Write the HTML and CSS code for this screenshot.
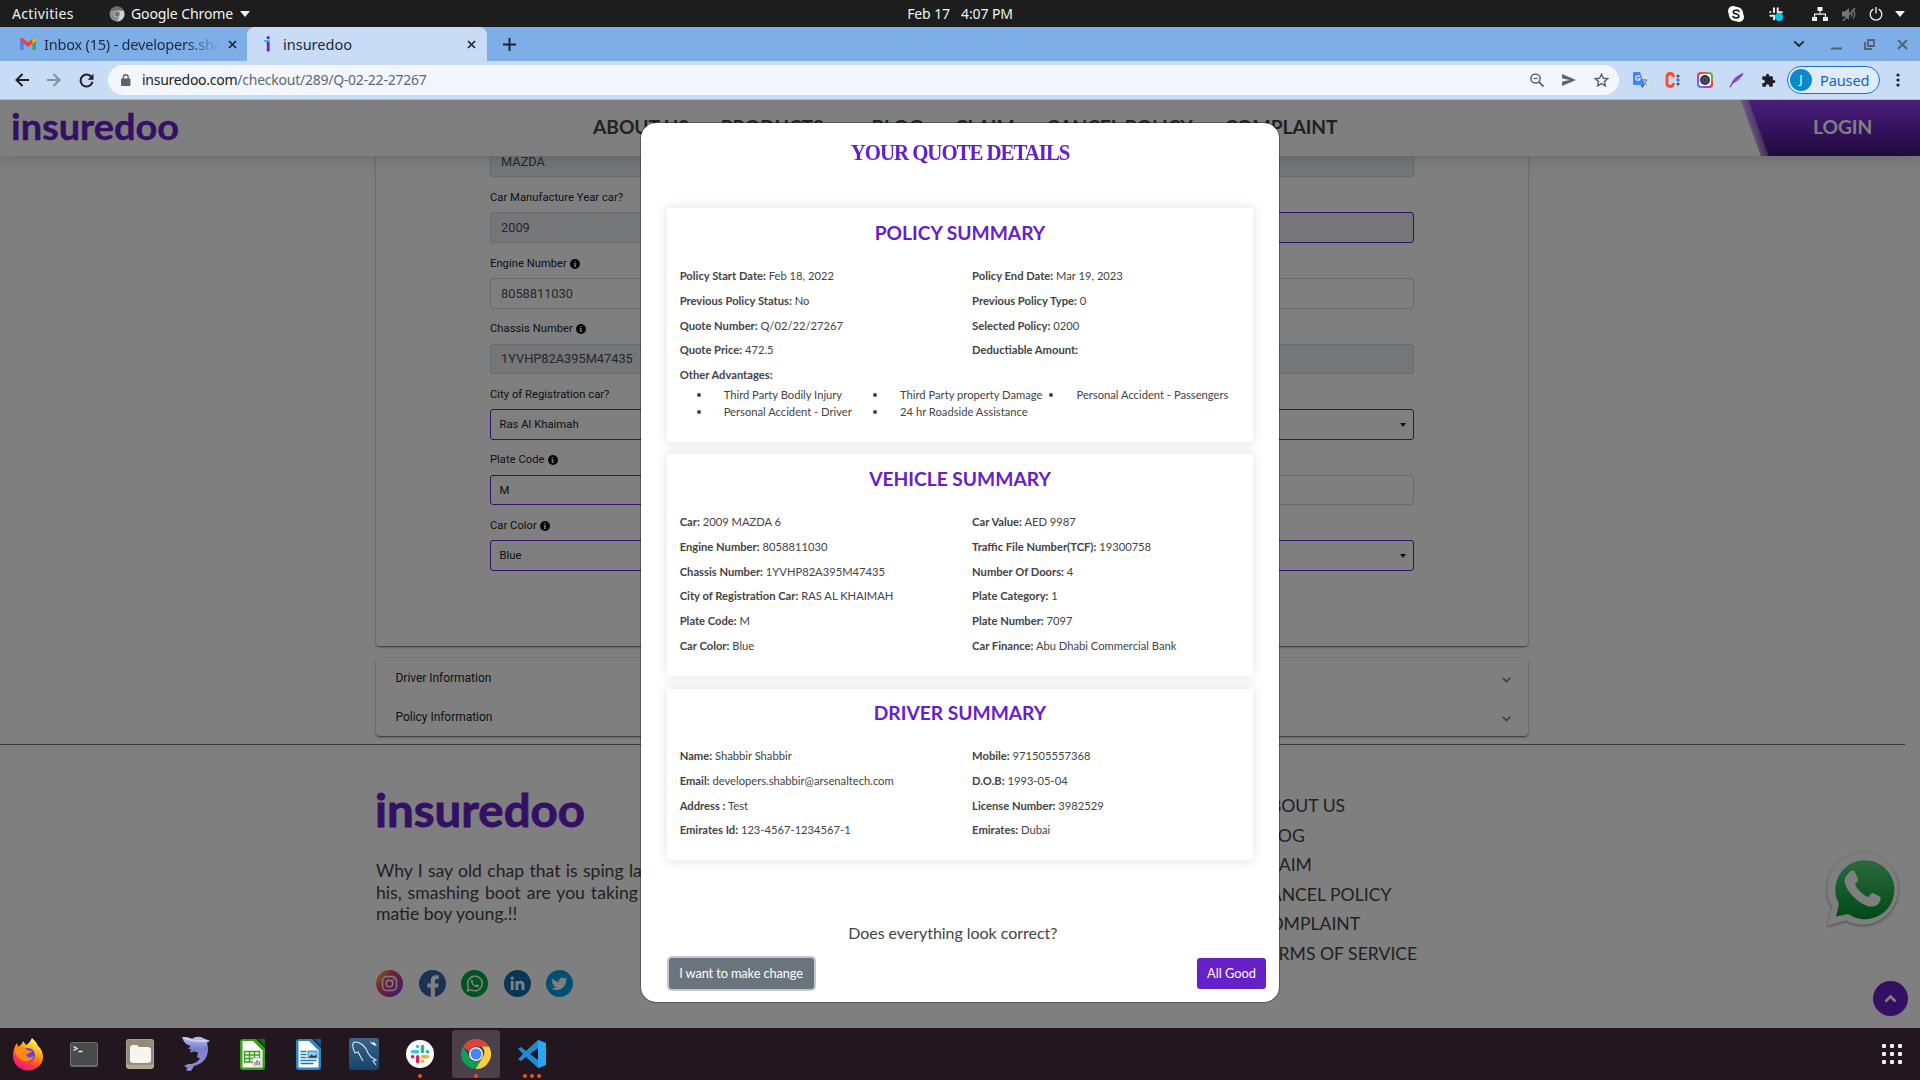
FILE: index.html
```html
<!DOCTYPE html>
<html lang="en">
<head>
<meta charset="utf-8">
<title>insuredoo</title>
<link rel="stylesheet" href="styles.css">
</head>
<body>
<div class="desktop">
  <div class="topbar">
    <div class="topbar-left">
      <span class="activities">Activities</span>
      <svg class="app-icon" width="16" height="16" viewBox="0 0 16 16"><circle cx="8" cy="8" r="7.5" fill="#8a8a8a"/><path d="M8 4.5h6.6A7.5 7.5 0 0 1 8 15.500l3-5.700z" fill="#d2d2d2"/><path d="M1.500 4.300A7.500 7.500 0 0 1 14.600 4.500H8z" fill="#6d6d6d"/><circle cx="8" cy="8" r="3.500" fill="#ccc"/><circle cx="8" cy="8" r="2.700" fill="#777"/></svg>
      <span class="app-name">Google Chrome</span>
      <svg class="caret" width="10" height="6" viewBox="0 0 10 6"><path d="M0 0h10L5 6z" fill="#f2f2f2"/></svg>
    </div>
    <div class="clock"><span>Feb 17</span><span>4:07 PM</span></div>
    <div class="topbar-right">
      <svg class="tray tray-skype" width="18" height="18" viewBox="0 0 18 18"><rect x="1" y="1" width="10" height="10" rx="5" fill="#fff"/><rect x="7" y="7" width="10" height="10" rx="5" fill="#fff"/><circle cx="9" cy="9" r="7.300" fill="#fff"/><path d="M12 6.300C11.200 4.900 6.300 4.600 6.300 7c0 2.600 5.600 1.300 5.600 4 0 2.500-5 2.200-5.900.5" fill="none" stroke="#1d1d1d" stroke-width="1.700" stroke-linecap="round"/></svg>
      <svg class="tray tray-slack" width="16" height="16" viewBox="0 0 16 16"><g stroke="#e8e8e8" stroke-width="2" stroke-linecap="round"><path d="M6 2.200v4M2.200 6h.2M2.300 9.700h4M9.700 2.200v4M9.800 6.200h4M6 10v3.500"/></g><circle cx="11" cy="11" r="4" fill="#00c8f5"/></svg>
      <svg class="tray tray-net" width="16" height="14" viewBox="0 0 16 14"><path d="M5.500 0h5v4h-2v2.500H14V10h2v4h-5v-4h1.800V7.700H3.200V10H5v4H0v-4h2V6.500h5.500V4h-2z" fill="#f2f2f2"/></svg>
      <svg class="tray tray-mute" width="16" height="16" viewBox="0 0 16 16"><path d="M1 5.500h3L8 2v12l-4-3.500H1z" fill="#777"/><path d="M10 5.500q2 2.500 0 5M12 3.500q3.400 4.500 0 9M2 15 14 2" fill="none" stroke="#777" stroke-width="1.300"/></svg>
      <svg class="tray tray-power" width="14" height="14" viewBox="0 0 14 14"><path d="M4.300 2.200a5.800 5.800 0 1 0 5.400 0M7 0v6.500" fill="none" stroke="#f2f2f2" stroke-width="1.300"/></svg>
      <svg class="tray" width="10" height="6" viewBox="0 0 10 6"><path d="M0 0h10L5 6z" fill="#f2f2f2"/></svg>
    </div>
  </div>

  <div class="tabstrip">
    <div class="tab">
      <svg width="16" height="12" viewBox="0 0 16 12"><path d="M0 2v9a1 1 0 0 0 1 1h2.600V5.500z" fill="#4285f4"/><path d="M16 2v9a1 1 0 0 1-1 1h-2.600V5.500z" fill="#34a853"/><path d="M0 2C0 .2 1.900-.6 3.200.6L8 4.300 12.800.6C14.100-.6 16 .2 16 2l-3.600 3.600L8 9 3.600 5.600z" fill="#ea4335"/><path d="M12.400 1v4.600L16 2.800V2C16 .2 14.100-.6 12.400 1z" fill="#fbbc04"/></svg>
      <span class="tab-title tab-title-faded">Inbox (15) - developers.sha</span>
      <svg class="tab-close" width="9" height="9" viewBox="0 0 9 9"><path d="M1 1l7 7M8 1L1 8" stroke="#1d2733" stroke-width="1.700"/></svg>
    </div>
    <div class="tab tab-active">
      <svg width="8" height="16" viewBox="0 0 8 16"><circle cx="5.200" cy="1.700" r="1.600" fill="#7a24c9"/><path d="M0 4h6.600v2.600H2.500z" fill="#12c3e8"/><path d="M3.800 6h2.800v9.500H3.800z" fill="#6d22c9"/></svg>
      <span class="tab-title">insuredoo</span>
      <svg class="tab-close" width="9" height="9" viewBox="0 0 9 9"><path d="M1 1l7 7M8 1L1 8" stroke="#1d2733" stroke-width="1.700"/></svg>
    </div>
    <svg class="new-tab" width="13" height="13" viewBox="0 0 13 13"><path d="M6.500 0v13M0 6.500h13" stroke="#202124" stroke-width="1.900"/></svg>
    <div class="window-controls">
      <svg width="12" height="8" viewBox="0 0 12 8"><path d="M1.300 1.300 6 6l4.700-4.700" fill="none" stroke="#202932" stroke-width="1.900"/></svg>
      <svg width="11" height="12" viewBox="0 0 11 12"><path d="M0 10.500h11" stroke="#56616e" stroke-width="2"/></svg>
      <svg width="11" height="11" viewBox="0 0 11 11"><path d="M4 1h6v6H4zM1 3v7h7" fill="none" stroke="#56616e" stroke-width="1.800"/></svg>
      <svg width="11" height="11" viewBox="0 0 11 11"><path d="M1 1l9 9M10 1l-9 9" stroke="#56616e" stroke-width="1.900"/></svg>
    </div>
  </div>

  <div class="toolbar">
    <svg class="nav-icon" width="14" height="14" viewBox="0 0 14 14"><path d="M7.500 1 1.500 7l6 6M1.500 7H14" fill="none" stroke="#1f2023" stroke-width="2"/></svg>
    <svg class="nav-icon" width="14" height="14" viewBox="0 0 14 14"><path d="M6.500 1l6 6-6 6M12.500 7H0" fill="none" stroke="#85909f" stroke-width="2"/></svg>
    <svg class="nav-icon" width="15" height="15" viewBox="0 0 15 15"><path d="M12.700 4.300A6 6 0 1 0 13.500 8.800" fill="none" stroke="#1f2023" stroke-width="2"/><path d="M14.500.8v6H8.600z" fill="#1f2023"/></svg>
    <div class="omnibox">
      <svg width="10" height="12" viewBox="0 0 10 12"><rect x="0" y="4.500" width="9.500" height="7.500" rx="1" fill="#5f6368"/><path d="M2.300 5V3.200a2.450 2.450 0 0 1 4.900 0V5" fill="none" stroke="#5f6368" stroke-width="1.300"/></svg>
      <span class="url"><b>insuredoo.com</b>/checkout/289/Q-02-22-27267</span>
      <div class="omni-actions">
        <svg width="14" height="14" viewBox="0 0 14 14"><circle cx="5.500" cy="5.500" r="4.600" fill="none" stroke="#5f6368" stroke-width="1.500"/><path d="M3.300 5.500h4.400" stroke="#5f6368" stroke-width="1.200"/><path d="M9 9l4.500 4.500" stroke="#5f6368" stroke-width="1.800"/></svg>
        <svg width="14" height="12" viewBox="0 0 14 12"><path d="M0 0l14 6L0 12l.2-4.600L8 6 .2 4.600z" fill="#5f6368"/></svg>
        <svg width="15" height="14" viewBox="0 0 15 14"><path d="M7.500 1.300l1.900 4 4.300.4-3.300 2.900 1 4.300-3.900-2.300-3.900 2.300 1-4.300L1.300 5.700l4.300-.4z" fill="none" stroke="#5f6368" stroke-width="1.400"/></svg>
      </div>
    </div>
    <div class="extensions">
      <svg width="16" height="16" viewBox="0 0 16 16"><path d="M6 4h9a1 1 0 0 1 1 1v10a1 1 0 0 1-1 1H9.500z" fill="#d8dde3"/><path d="M8.500 8h6M11.500 7v1M13.500 8q-1 4-4 5M10 9q1 2.500 4 4" fill="none" stroke="#607d8b" stroke-width="1"/><path d="M1 0h6l4.500 13H1a1 1 0 0 1-1-1V1a1 1 0 0 1 1-1z" fill="#4285f4"/><path d="M7.500 13h4l-2 3z" fill="#2a56c6"/><path d="M7 4.700a2.300 2.300 0 1 0 .3 2H5.200" fill="none" stroke="#fff" stroke-width="1.100"/></svg>
      <svg width="16" height="16" viewBox="0 0 16 16"><path d="M8.300 5V4.200Q8.300 1.500 5.200 1.500 2 1.500 2 4.500v7q0 3 3.200 3 3.100 0 3.100-2.700V11" fill="none" stroke="#ff4b2b" stroke-width="2.800"/><circle cx="13" cy="4" r="1.500" fill="#42526b"/><circle cx="13" cy="8" r="1.700" fill="#1e88e5"/><circle cx="13" cy="12" r="1.500" fill="#42526b"/></svg>
      <svg width="16" height="16" viewBox="0 0 16 16"><defs><linearGradient id="cam" x1="0" y1="1" x2="1" y2="0"><stop offset="0" stop-color="#16b5ff"/><stop offset=".3" stop-color="#b236e8"/><stop offset=".6" stop-color="#ff4030"/><stop offset="1" stop-color="#3ee06a"/></linearGradient></defs><rect width="16" height="16" rx="3.500" fill="url(#cam)"/><rect x="2" y="2" width="12" height="12" rx="3" fill="#fff"/><circle cx="8" cy="8" r="5" fill="#2e3b3f"/><circle cx="8" cy="8" r="2.300" fill="none" stroke="#5c777d"/></svg>
      <svg width="16" height="16" viewBox="0 0 16 16"><path d="M15 .5Q3 5 2.500 12 12 9 15 .5z" fill="#a66bd0"/><path d="M.8 15.300Q5 8 13.500 2" fill="none" stroke="#6d2f96" stroke-width="1.100"/></svg>
      <svg width="15" height="15" viewBox="0 0 24 24"><path d="M20.500 11H19V7c0-1.100-.9-2-2-2h-4V3.500a2.500 2.500 0 0 0-5 0V5H4c-1.100 0-2 .9-2 2v3.800h1.500a2.700 2.700 0 0 1 0 5.400H2V20c0 1.100.9 2 2 2h3.800v-1.500a2.700 2.700 0 0 1 5.400 0V22H17c1.100 0 2-.9 2-2v-4h1.500a2.500 2.500 0 0 0 0-5z" fill="#202124"/></svg>
    </div>
    <div class="profile"><span class="avatar">J</span><span class="paused">Paused</span></div>
    <svg class="kebab" width="4" height="14" viewBox="0 0 4 14"><circle cx="2" cy="2" r="1.600" fill="#202124"/><circle cx="2" cy="7" r="1.600" fill="#202124"/><circle cx="2" cy="12" r="1.600" fill="#202124"/></svg>
  </div>

  <div class="viewport">
    <header class="site-header">
      <svg class="logo" width="168" height="50" viewBox="0 0 168 50"><text x="-1" y="37" textLength="168" lengthAdjust="spacingAndGlyphs" class="logo-text logo-text-sm">insuredoo</text></svg>
      <nav class="site-nav">
        <span>ABOUT US</span><span class="has-menu">PRODUCTS</span><span>BLOG</span><span>CLAIM</span><span>CANCEL POLICY</span><span>COMPLAINT</span>
      </nav>
      <div class="login">LOGIN</div>
    </header>

    <main class="form-card">
      <div class="field"><div class="input input-locked">MAZDA</div></div>
      <div class="field"><label>Car Manufacture Year car?</label><div class="split"><div class="input input-locked">2009</div><div class="input input-locked input-purple"></div></div></div>
      <div class="field"><label>Engine Number <i class="info">i</i></label><div class="input">8058811030</div></div>
      <div class="field"><label>Chassis Number <i class="info">i</i></label><div class="input input-locked">1YVHP82A395M47435</div></div>
      <div class="field"><label>City of Registration car?</label><div class="input input-purple input-select">Ras Al Khaimah<i class="arrow"></i></div></div>
      <div class="field"><label>Plate Code <i class="info">i</i></label><div class="split"><div class="input input-purple input-select">M</div><div class="input"></div></div></div>
      <div class="field"><label>Car Color <i class="info">i</i></label><div class="input input-purple input-select">Blue<i class="arrow"></i></div></div>
    </main>

    <section class="accordion">
      <div class="accordion-row"><span>Driver Information</span><svg width="9" height="6" viewBox="0 0 9 6"><path d="M.8.800 4.500 4.500 8.200.8" fill="none" stroke="#777" stroke-width="1.600"/></svg></div>
      <div class="accordion-row"><span>Policy Information</span><svg width="9" height="6" viewBox="0 0 9 6"><path d="M.8.800 4.500 4.500 8.200.8" fill="none" stroke="#777" stroke-width="1.600"/></svg></div>
    </section>

    <footer class="site-footer">
      <div class="about">
        <svg class="footer-logo" width="212" height="56" viewBox="0 0 212 56"><text x="-1" y="43" textLength="210" lengthAdjust="spacingAndGlyphs" class="logo-text">insuredoo</text></svg>
        <p class="about-text"><span class="first">Why I say old chap that is sping lav</span><span>his, smashing boot are you taking</span><span class="last">matie boy young.!!</span></p>
        <div class="social">
          <svg width="27" height="27" viewBox="0 0 27 27"><defs><linearGradient id="ig" x1="0" y1="0" x2="1" y2=".7"><stop offset=".08" stop-color="#ffb13d"/><stop offset=".45" stop-color="#e5406c"/><stop offset="1" stop-color="#8a35e0"/></linearGradient></defs><circle cx="13.500" cy="13.500" r="13.500" fill="url(#ig)"/><rect x="6.500" y="6.500" width="14" height="14" rx="4" fill="none" stroke="#fff" stroke-width="1.500"/><circle cx="13.500" cy="13.500" r="3.300" fill="none" stroke="#fff" stroke-width="1.500"/><circle cx="17.700" cy="9.300" r="1" fill="#fff"/></svg>
          <svg width="27" height="27" viewBox="0 0 27 27"><circle cx="13.500" cy="13.500" r="13.500" fill="#3b62a8"/><path d="M11.800 27v-9.500H8.300v-4h3.500v-3c0-3.500 2-5.300 5.200-5.300 1.500 0 2.800.2 2.800.2V9h-1.700c-1.700 0-2.200 1-2.200 2.100v2.400h3.800l-.6 4h-3.200V27z" fill="#fff"/></svg>
          <svg width="27" height="27" viewBox="0 0 27 27"><circle cx="13.500" cy="13.500" r="13.500" fill="#00a840"/><path d="M6.500 21l1.100-4A7.300 7.300 0 1 1 10.500 19.900z" fill="none" stroke="#fff" stroke-width="1.500"/><path d="M11 9.500c-1 .3-1.600 2-.5 3.800 1.400 2.400 3.600 4 5.300 4 1.300 0 2.200-1.200 2-2.100l-2.100-1-1.200 1.200c-1.200-.5-2.400-1.700-2.900-2.900l.9-1z" fill="#fff"/></svg>
          <svg width="27" height="27" viewBox="0 0 27 27"><circle cx="13.500" cy="13.500" r="13.500" fill="#136ca5"/><path d="M6.800 11h2.900v9H6.800zM11.500 11h2.700v1.300c1.500-2.400 6.200-2 6.200 2.400V20h-2.900v-4.800c0-2.600-3.100-2.200-3.100 0V20h-2.900z" fill="#fff"/><circle cx="8.200" cy="8.200" r="1.600" fill="#fff"/></svg>
          <svg width="27" height="27" viewBox="0 0 27 27"><circle cx="13.500" cy="13.500" r="13.500" fill="#00a2e2"/><path d="M6 8.200c1.900 2.200 4.400 3.500 7.300 3.600-.8-3.700 3.200-5.600 5.500-3.400l2.200-.8-1.300 1.900 1.800-.4-1.600 1.700c.2 7.500-8 11.500-14.400 7.600 1.800.2 3.500-.3 4.700-1.300-1.500-.1-2.700-1-3.100-2.300h1.400c-1.600-.5-2.700-1.800-2.700-3.400l1.500.5C5.800 10.800 5.500 9.400 6 8.200z" fill="#fff"/></svg>
        </div>
      </div>
      <ul class="footer-links"><li>ABOUT US</li><li>BLOG</li><li>CLAIM</li><li>CANCEL POLICY</li><li>COMPLAINT</li><li>TERMS OF SERVICE</li></ul>
    </footer>

    <svg class="whatsapp" width="76" height="80" viewBox="0 0 76 80"><defs><linearGradient id="wa" x1="0" y1="0" x2="0" y2="1"><stop offset="0" stop-color="#58d67a"/><stop offset="1" stop-color="#00932e"/></linearGradient></defs><path class="wa-ring" d="M2 76 7 57A35.500 36 0 1 1 21 70.500z" fill="#fcfcfc"/><path d="M11 66.500l3-12.500A29.500 29.500 0 1 1 23 64z" fill="url(#wa)"/><path d="M24 23c2-3 5-3 6-1l3 7c.500 2-2 4-3 5.500 3 6 8 10.500 13 12.500 2-1.500 3-4.500 5-4l7 3.500c1.500 1.500.5 6-3 8.500-4 2.500-9 2-14-1C28 48.500 20 38 19.500 31c0-3 2-6 4.500-8z" fill="#fff"/></svg>
    <div class="to-top"><svg width="13" height="9" viewBox="0 0 13 9"><path d="M1.500 7.500l5-5 5 5" fill="none" stroke="#fff" stroke-width="2.600"/></svg></div>

    <div class="backdrop">
      <div class="modal">
        <h1>YOUR QUOTE DETAILS</h1>
        <section class="summary policy">
          <h2>POLICY SUMMARY</h2>
          <dl>
            <div><b>Policy Start Date:</b> Feb 18, 2022</div><div><b>Policy End Date:</b> Mar 19, 2023</div>
            <div><b>Previous Policy Status:</b> No</div><div><b>Previous Policy Type:</b> 0</div>
            <div><b>Quote Number:</b> Q/02/22/27267</div><div><b>Selected Policy:</b> 0200</div>
            <div><b>Quote Price:</b> 472.5</div><div><b>Deductiable Amount:</b></div>
            <div><b>Other Advantages:</b></div>
          </dl>
          <ul><li>Third Party Bodily Injury</li><li>Third Party property Damage</li><li>Personal Accident - Passengers</li><li>Personal Accident - Driver</li><li>24 hr Roadside Assistance</li></ul>
        </section>
        <section class="summary vehicle">
          <h2>VEHICLE SUMMARY</h2>
          <dl>
            <div><b>Car:</b> 2009 MAZDA 6</div><div><b>Car Value:</b> AED 9987</div>
            <div><b>Engine Number:</b> 8058811030</div><div><b>Traffic File Number(TCF):</b> 19300758</div>
            <div><b>Chassis Number:</b> 1YVHP82A395M47435</div><div><b>Number Of Doors:</b> 4</div>
            <div><b>City of Registration Car:</b> RAS AL KHAIMAH</div><div><b>Plate Category:</b> 1</div>
            <div><b>Plate Code:</b> M</div><div><b>Plate Number:</b> 7097</div>
            <div><b>Car Color:</b> Blue</div><div><b>Car Finance:</b> Abu Dhabi Commercial Bank</div>
          </dl>
        </section>
        <section class="summary driver">
          <h2>DRIVER SUMMARY</h2>
          <dl>
            <div><b>Name:</b> Shabbir Shabbir</div><div><b>Mobile:</b> 971505557368</div>
            <div><b>Email:</b> developers.shabbir@arsenaltech.com</div><div><b>D.O.B:</b> 1993-05-04</div>
            <div><b>Address :</b> Test</div><div><b>License Number:</b> 3982529</div>
            <div><b>Emirates Id:</b> 123-4567-1234567-1</div><div><b>Emirates:</b> Dubai</div>
          </dl>
        </section>
        <p class="question">Does everything look correct?</p>
        <div class="actions"><button class="btn btn-gray">I want to make change</button><button class="btn btn-purple">All Good</button></div>
      </div>
    </div>
  </div>

  <div class="dock">
    <div class="dock-item"><svg width="32" height="34" viewBox="0 0 32 34"><defs><linearGradient id="ff" x1=".8" y1="0" x2=".3" y2="1"><stop offset=".1" stop-color="#fff44f"/><stop offset=".45" stop-color="#ff980e"/><stop offset=".75" stop-color="#ff3647"/><stop offset="1" stop-color="#e31587"/></linearGradient></defs><path d="M20 1c3 3 5 5 6 8 3 2 5 7 5 11 0 8-7 13.500-15 13.500S1 27.500 1 19c0-5 1-9 4-13l1 4c2-2 4-2 5-6l3 4c2-1 4-3 6-7z" fill="url(#ff)"/><circle cx="16" cy="18" r="7" fill="#6a3fd0"/><path d="M3 13c4-5 9-3 12 0l5 1c-2 3-5 2-6 4 1 3 5 3 8 1-2 5-7 7-12 4-4-2-7-5-7-10z" fill="#ff8a16"/></svg></div>
    <div class="dock-item"><svg width="28" height="25" viewBox="0 0 28 25"><rect width="28" height="25" rx="2.500" fill="#6a6a6a"/><rect x="1" y="1" width="26" height="22" rx="2" fill="#494a4a"/><path d="M3.500 4.500 7 6.500 3.500 8.500M8.500 9.500h4" fill="none" stroke="#eee" stroke-width="1.400"/></svg></div>
    <div class="dock-item"><svg width="28" height="30" viewBox="0 0 28 30"><rect width="28" height="30" rx="3" fill="#b3aa98"/><rect x=".7" y=".7" width="26.600" height="25" rx="2.500" fill="#938a78"/><path d="M4 9q0-3 3-3h4l2 2h9q3 0 3 3v10q0 3-3 3H7q-3 0-3-3z" fill="#f7f5f0"/></svg></div>
    <div class="dock-item"><svg width="30" height="36" viewBox="0 0 30 36"><defs><linearGradient id="dl" x1="0" y1="0" x2="0" y2="1"><stop offset="0" stop-color="#b9c2ee"/><stop offset=".35" stop-color="#7b7ed0"/><stop offset="1" stop-color="#8d90cc"/></linearGradient></defs><path d="M1 1.500C6 .5 9 2 11 3c3-2.500 7-3 11-1l7 3-3 1.500C28.500 16 27 26 13 30l-3 5-5-.5 1.500-2.500-3.500-2 4-2c6 0 10-2 12-6l-3-.500 1-5-3.500-1c-2 0-3 1-4.500 1l1-3-3-1 3-2.500C4.500 9 3 5.500 1 1.500z" fill="url(#dl)"/><path d="M1 1.500C6 .5 9 2 11 3q4 2.500 6 .500 3 1.500 5.500 0L29 5l-5 1q-8 0-14-1z" fill="#cdd4f0"/></svg></div>
    <div class="dock-item"><svg width="25" height="31" viewBox="0 0 25 31"><path d="M3 0h13l9 9v19q0 3-3 3H3q-3 0-3-3V3q0-3 3-3z" fill="#36a116"/><path d="M2.500 2H13l9.500 9.500V28.500H2.500z" fill="#fff"/><path d="M18 0h7v7z" fill="#1f6b0c"/><path d="M4.500 12.500h15v10.500h-15zM4.500 16h15M4.500 19.500h15M9.500 12.500V23M14.500 12.500V23" fill="none" stroke="#36a116" stroke-width="1.500"/><rect x="13" y="19" width="8" height="8" fill="#fff" stroke="#aaa" stroke-width=".7"/><path d="M15 26v-3M19.200 26v-4" stroke="#d3542b" stroke-width="1.300"/><path d="M17 26v-5" stroke="#2b78c4" stroke-width="1.300"/></svg></div>
    <div class="dock-item"><svg width="25" height="31" viewBox="0 0 25 31"><path d="M3 0h13l9 9v19q0 3-3 3H3q-3 0-3-3V3q0-3 3-3z" fill="#2b86c4"/><path d="M2.500 2H13l9.500 9.500V28.500H2.500z" fill="#fff"/><path d="M18 0h7v7z" fill="#12598e"/><path d="M4.500 12.500h6M4.500 15.500h6M4.500 18.500h6M4.500 21.500h16M4.500 24.500h13" stroke="#1c74b0" stroke-width="1.300"/><rect x="12" y="12" width="9" height="7" fill="#8fc6ec" stroke="#1c74b0" stroke-width=".8"/><path d="M12.500 18.500l3-3 2 1.500 3-1v2.500z" fill="#333"/></svg></div>
    <div class="dock-item"><svg width="30" height="32" viewBox="0 0 30 32"><defs><linearGradient id="ms" x1="0" y1="0" x2="0" y2="1"><stop offset="0" stop-color="#3a6288"/><stop offset="1" stop-color="#14466e"/></linearGradient></defs><rect width="30" height="32" rx="3" fill="url(#ms)"/><path d="M6 15C3 9 3 4 6 4c6 0 11 5 13 11l3 4 5 3-3 1 3 4M6 15l3-1 5 9" fill="none" stroke="#dbe6ef" stroke-width="1.100"/><path d="M21 3l2 2 2-1 3 4-2-.5-4-2z" fill="#fff"/></svg></div>
    <div class="dock-item"><svg width="28" height="28" viewBox="0 0 28 28"><circle cx="14" cy="14" r="14" fill="#fff"/><g stroke-width="3.400" stroke-linecap="round"><path d="M11.500 6.500h.2M6.500 11.700h5" stroke="#36c5f0"/><path d="M16.500 6.500v5M21.500 11.700h-.2" stroke="#2eb67d"/><path d="M16.500 16.700h5M16.500 21.500v-.2" stroke="#ecb22e"/><path d="M11.700 16.700v5M6.500 16.700h.2" stroke="#e01e5a"/></g></svg><i class="dots"><i></i></i></div>
    <div class="dock-item dock-active"><svg width="30" height="30" viewBox="0 0 30 30"><path d="M2 7.500A15 15 0 0 1 28 7.500H15a7.500 7.500 0 0 0-7 5z" fill="#db4437"/><path d="M28 7.500A15 15 0 0 1 14.500 30l7-11.500a7.500 7.500 0 0 0-1-11z" fill="#ffcd40"/><path d="M2 7.500A15 15 0 0 0 14.500 30l6.500-10.800-5 3.200a7.500 7.500 0 0 1-7.500-4z" fill="#0f9d58"/><circle cx="15" cy="15" r="7" fill="#f1f1f1"/><circle cx="15" cy="15" r="5.500" fill="#4285f4"/></svg><i class="dots"><i></i></i></div>
    <div class="dock-item"><svg width="28" height="28" viewBox="0 0 28 28"><path d="M20 0l8 3v22l-8 3L8 17l-5 4-3-1.500L5 14 0 8.500 3 7l5 4zM20 8l-8 6 8 6z" fill="#1f8ad2" fill-rule="evenodd"/><path d="M20 0l8 3v22l-8 3z" fill="#2aa7f0"/></svg><i class="dots"><i></i><i></i><i></i></i></div>
    <div class="app-grid"><i></i><i></i><i></i><i></i><i></i><i></i><i></i><i></i><i></i></div>
  </div>
</div>
</body>
</html>
```
FILE: styles.css
```css
* { box-sizing: border-box; }
body { margin: 0; font-family: "Lato", "Liberation Sans", sans-serif; }
svg { display: block; flex: none; }
.desktop { width: 1920px; height: 1080px; display: flex; flex-direction: column; overflow: hidden; }

/* desktop top bar */
.topbar { height: 27px; background: #1d1d1d; color: #f2f2f2; display: grid; grid-template-columns: 1fr auto 1fr; align-items: center; font: 14px/27px "Noto Sans", sans-serif; letter-spacing: -.1px; }
.topbar-left { display: flex; align-items: center; padding-left: 12px; }
.activities { width: 97px; letter-spacing: .35px; }
.app-icon { margin-right: 6px; }
.app-name { width: 109px; white-space: nowrap; }
.clock { display: flex; gap: 11px; }
.topbar-right { display: flex; align-items: center; justify-content: flex-end; padding-right: 15px; }
.tray-skype { margin-right: 23px; }
.tray-slack { margin-right: 28px; }
.tray-net { margin-right: 13px; }
.tray-mute { margin-right: 12px; }
.tray-power { margin-right: 12px; }

/* browser chrome */
.tabstrip { height: 34px; background: #7daee7; display: flex; align-items: center; font: 14.500px/34px "Noto Sans", sans-serif; color: #1c2a3b; }
.tab { width: 247px; height: 34px; display: flex; align-items: center; padding-left: 20px; }
.tab-active { width: 240px; background: #c8dcf5; border-radius: 8px 8px 0 0; padding-left: 16px; }
.tab-title { margin-left: 8px; width: 175.500px; white-space: nowrap; overflow: hidden; }
.tab-active .tab-title { margin-left: 12px; width: 183.500px; }
.tab-title-faded { letter-spacing: -.2px; -webkit-mask-image: linear-gradient(90deg, #000 80%, transparent); mask-image: linear-gradient(90deg, #000 80%, transparent); }
.tab-close { margin-left: 8px; }
.tab-active .tab-close { margin-left: 0; }
.new-tab { margin-left: 15.500px; }
.window-controls { margin-left: auto; display: flex; align-items: center; padding-right: 12px; gap: 22px; }
.window-controls svg:first-child { margin-right: 4px; }
.toolbar { height: 39px; background: #c8dcf5; border-bottom: 1px solid #a9bbd2; display: flex; align-items: center; padding-left: 15px; }
.nav-icon { margin-right: 18px; }
.nav-icon:nth-child(3) { margin-right: 14px; }
.omnibox { width: 1511px; height: 30px; border-radius: 15px; background: #f3f7fd; display: flex; align-items: center; padding: 0 10px 0 13px; }
.url { font: 14px/30px "Noto Sans", sans-serif; letter-spacing: -.25px; color: #62676d; margin-left: 11px; }
.url b { font-weight: 400; color: #202124; }
.omni-actions { margin-left: auto; display: flex; align-items: center; gap: 18px; }
.extensions { display: flex; align-items: center; gap: 16px; margin-left: 14px; }
.profile { width: 93px; height: 28px; margin-left: 11px; border: 1px solid #1a73c9; border-radius: 14px; background: #e1ebf8; display: flex; align-items: center; padding-left: 2px; font: 14.500px/26px "Noto Sans", sans-serif; color: #0b66c3; }
.avatar { width: 22px; height: 22px; border-radius: 50%; background: #0a8acb; color: #fff; font-size: 12px; line-height: 22px; text-align: center; margin-right: 8px; }
.paused { letter-spacing: -.1px; }
.kebab { margin-left: 16px; }

/* web page */
.viewport { position: relative; height: 928px; background: #fff; overflow: hidden; }
.site-header { position: relative; z-index: 1; height: 56px; background: #fff; display: flex; align-items: center; box-shadow: 0 2px 16px rgba(40, 50, 70, .22); }
.logo { margin-left: 12px; overflow: visible; }
.footer-logo { overflow: visible; }
.logo-text { font: 700 45px "Lato", sans-serif; fill: #6620c8; stroke: #6620c8; stroke-width: .8px; }
.logo-text-sm { font-size: 37px; stroke-width: .4px; }
.site-nav { margin: -3px 0 0 413px; display: flex; gap: 32px; font-size: 19.200px; font-weight: 700; letter-spacing: -.04px; color: #434343; white-space: nowrap; }
.has-menu { margin-right: 16px; }
.login { margin-left: auto; width: 179px; height: 56px; line-height: 54px; padding-left: 72px; font-size: 19.200px; font-weight: 700; letter-spacing: -.04px; color: #fff; background: linear-gradient(70.300deg, transparent 18px, rgba(255, 255, 255, .6) 19px, rgba(255, 255, 255, .35) 25px, transparent 27px), linear-gradient(180deg, #963cf0, #6a26c0 50%, #42137a); clip-path: polygon(0 0, 100% 0, 100% 100%, 20px 100%); }
.form-card { width: 1152px; height: 490px; margin: 0 0 0 376px; padding: 0 114px; border-radius: 0 0 4px 4px; box-shadow: 0 2px 1px -1px rgba(0, 0, 0, .3), 0 1px 3px rgba(0, 0, 0, .4); }
.field { height: 65.600px; display: flex; flex-direction: column; justify-content: flex-end; }
.field:first-child { height: 21.400px; }
.field label { font: 11.200px/14px "Roboto", sans-serif; letter-spacing: .04px; color: #212529; margin-bottom: 7.400px; display: flex; align-items: center; gap: 3px; }
.info { width: 10px; height: 10px; border-radius: 50%; background: #111; color: #fff; font: bold 9px/10px "Liberation Serif", serif; text-align: center; }
.input { flex: none; height: 30.600px; border: 1px solid #ced4da; border-radius: 3px; font: 12.800px/28px "Roboto", sans-serif; color: #495057; padding: .500px 0 0 10px; background: #fff; display: flex; align-items: center; }
.input-locked { background: #e9ecef; }
.input-purple { border-color: #6620c8; }
.input-select { font-size: 11.300px; color: #212529; padding: 1.500px 0 0 8.500px; }
.split { display: grid; grid-template-columns: 1fr 1fr; gap: 24px; }
.arrow { margin-left: auto; margin-right: 7px; border: 3px solid transparent; border-top: 4px solid #222; border-bottom: 0; }
.accordion { width: 1152px; margin: 12px 0 0 376px; border-radius: 4px; box-shadow: 0 2px 1px -1px rgba(0, 0, 0, .3), 0 1px 3px rgba(0, 0, 0, .4); }
.accordion-row { height: 39px; display: flex; align-items: center; justify-content: space-between; padding: 1px 17px 0 19.500px; font: 12px/38px "Roboto", sans-serif; letter-spacing: -.03px; color: #212529; }
.accordion-row svg { margin-top: 3px; }
.accordion-row + .accordion-row { border-top: 1px solid #f4f4f4; padding-top: 0; }
.site-footer { width: 1905px; margin-top: 8px; border-top: 1px solid #747474; padding: 42px 0 0 376px; display: grid; grid-template-columns: 882px 1fr; }
.footer-logo { margin-top: -3px; }
.about-text { margin: 20px 0 0; font-size: 17.600px; line-height: 21.600px; color: #434343; white-space: nowrap; }
.about-text span { display: block; word-spacing: 1.400px; }
.about-text .first { word-spacing: .800px; }
.about-text .last { word-spacing: 0; }
.social { display: flex; gap: 15.500px; margin-top: 45px; }
.footer-links { list-style: none; margin: 4px 0 0; padding: 0; font-size: 17.600px; line-height: 29.600px; color: #434343; }
.whatsapp { position: absolute; left: 1825px; top: 750px; }
.wa-ring { filter: drop-shadow(0 1px 1.500px rgba(0, 0, 0, .45)); }
.to-top { position: absolute; left: 1873px; top: 881px; width: 35px; height: 35px; border-radius: 50%; background: #6620c8; display: flex; align-items: center; justify-content: center; }

/* dialog */
.backdrop { position: absolute; inset: 0; z-index: 2; background: rgba(0, 0, 0, .5); display: flex; justify-content: center; align-items: flex-start; padding-top: 22px; }
.modal { width: 640px; height: 881px; background: #fff; background-clip: padding-box; border: 1px solid rgba(0, 0, 0, .3); border-radius: 16px; padding: 0 26px; color: #434343; }
.modal h1 { margin: 13px 0 0; height: 72px; font: bold 24px/32px "Liberation Serif", serif; letter-spacing: -1.200px; text-align: center; color: #6620c8; transform: scaleX(.87); }
.summary { height: 234px; background: #fff; box-shadow: 0 0 12px rgba(0, 0, 0, .13); margin-bottom: 12px; padding: 13px 12.700px 0; }
.vehicle { height: 222px; margin-bottom: 13px; }
.driver { height: 171px; padding-top: 12px; }
.summary h2 { margin: 0; font-size: 19.200px; line-height: 24px; font-weight: 700; letter-spacing: 0; text-align: center; color: #6620c8; }
.summary dl { margin: 19px 0 0; display: grid; grid-template-columns: 292.400px 1fr; grid-auto-rows: 24.800px; font-size: 11.200px; line-height: 24.600px; white-space: nowrap; }
.summary ul { list-style: none; margin: -1.500px 0 0; padding: 0; display: grid; grid-template-columns: repeat(3, 176.400px); font-size: 11.200px; line-height: 17px; white-space: nowrap; }
.summary li { display: flex; align-items: center; padding-left: 17px; }
.summary li::before { content: ""; flex: none; width: 4px; height: 4px; border-radius: 50%; background: #434343; margin-right: 23px; }
.question { margin: 61px 0 0; padding-right: 14.500px; font-size: 16px; line-height: 24px; letter-spacing: -.04px; text-align: center; }
.actions { display: flex; justify-content: space-between; margin: 13px -13px 0 1.500px; }
.btn { height: 31px; border: 0; border-radius: 3px; padding: 0 0 1px; font: 12.800px "Lato", sans-serif; color: #fff; }
.btn-gray { width: 145px; background: #69747d; box-shadow: 0 0 0 2px #c4c8cc; letter-spacing: -.12px; }
.btn-purple { width: 69px; background: #6620c8; }

/* dock */
.dock { height: 52px; background: #22161f; display: flex; align-items: center; padding-left: 4px; }
.dock-item { position: relative; width: 48px; height: 48px; margin-right: 8px; display: flex; align-items: center; justify-content: center; border-radius: 3px; }
.dock-active { background: #4a404a; }
.dots { position: absolute; bottom: 0; left: 0; right: 0; display: flex; justify-content: center; gap: 3px; }
.dots i { width: 4px; height: 4px; border-radius: 50%; background: #e95420; }
.app-grid { margin: 0 18px 0 auto; display: grid; grid-template-columns: repeat(3, 4px); gap: 4px; }
.app-grid i { height: 4px; background: #f2f2f2; border-radius: 1px; }
```
